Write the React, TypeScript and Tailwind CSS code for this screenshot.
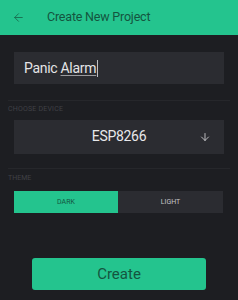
import { ArrowLeft, ArrowDown } from "lucide-react";

export default function App() {
  return (
    <div
      className="w-[238px] h-[300px] bg-[#1d1e22] flex flex-col"
      style={{ fontFamily: "Roboto, 'Noto Sans', sans-serif" }}
    >
      <header className="h-[35px] bg-[#24c48e] flex items-center px-[12px] gap-[22px]">
        <ArrowLeft className="w-[13px] h-[13px] text-[#17694c]" strokeWidth={1.6} />
        <h1 className="text-[12.5px] text-[#14553f] tracking-[-0.2px]">Create New Project</h1>
      </header>

      <div className="px-[14px] pt-[17px]">
        <div className="h-[32px] bg-[#2b2c31] flex items-center px-[10px]">
          <span className="text-[14px] text-[#e4e4e6] tracking-[-0.3px]">
            Panic <span className="underline underline-offset-2 decoration-[#9a9a9e]">Alarm</span>
          </span>
          <span className="w-px h-[17px] bg-[#bfbfc2] ml-px" />
        </div>
      </div>

      <div className="mx-[8px] mt-[16px] border-t border-[#26272b] pt-[3px]">
        <p className="text-[7px] text-[#404146] uppercase tracking-[0.2px]">Choose device</p>
      </div>

      <div className="px-[14px] pt-[5px]">
        <div className="h-[34px] bg-[#2b2c31] flex items-center relative">
          <span className="flex-1 text-center text-[14px] text-[#e8e8ea] tracking-[-0.3px]">ESP8266</span>
          <ArrowDown
            className="absolute right-[13px] top-[11px] w-[12px] h-[12px] text-[#dcdcde]"
            strokeWidth={1.6}
          />
        </div>
      </div>

      <div className="mx-[8px] mt-[14px] border-t border-[#26272b] pt-[4px]">
        <p className="text-[7px] text-[#404146] uppercase">Theme</p>
      </div>

      <div className="px-[14px] pt-[8px]">
        <div className="h-[22px] flex w-[209px]">
          <div className="w-[104px] bg-[#24c48e] flex items-center justify-center text-[7px] text-[#14553f]">
            DARK
          </div>
          <div className="flex-1 bg-[#2b2c31] flex items-center justify-center text-[7px] text-[#c4c4c7]">
            LIGHT
          </div>
        </div>
      </div>

      <div className="flex justify-center pt-[45px]">
        <button className="w-[174px] h-[32px] bg-[#24c48e] rounded-[3px] text-[15px] text-[#14553f]">
          Create
        </button>
      </div>
    </div>
  );
}
